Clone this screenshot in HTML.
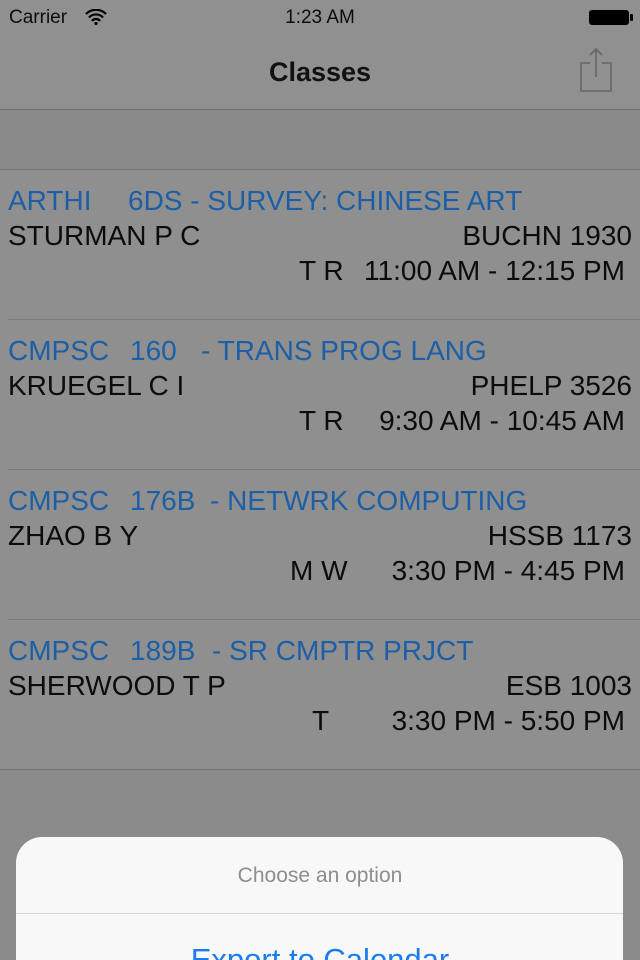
<!DOCTYPE html>
<html style="margin:0;width:640px;height:960px;overflow:hidden"><head><style>
body{margin:0;width:640px;height:960px;overflow:hidden;background:#8b8b8c;font-family:"Liberation Sans",sans-serif;position:relative}
.abs{position:absolute}
.t{position:absolute;font-size:28px;white-space:nowrap;line-height:1}
.b{color:#1c5fa6}.k{color:#0c0c0c}
</style></head><body>
<div class="abs" style="left:0;top:0;width:640px;height:109px;background:#909090"></div>
<div class="abs" style="left:0;top:109px;width:640px;height:1px;background:#6e6e6e"></div>
<div class="abs" style="left:0;top:110px;width:640px;height:59px;background:#8a8a8a"></div>
<div class="abs" style="left:0;top:169px;width:640px;height:1px;background:#747474"></div>
<div class="abs" style="left:0;top:170px;width:640px;height:599px;background:#8f8f8f"></div>
<div class="abs" style="left:0;top:769px;width:640px;height:1px;background:#747474"></div>
<div class="abs" style="left:8px;top:319px;width:632px;height:1px;background:#7a7a7a"></div>
<div class="abs" style="left:8px;top:469px;width:632px;height:1px;background:#7a7a7a"></div>
<div class="abs" style="left:8px;top:619px;width:632px;height:1px;background:#7a7a7a"></div>

<div class="t k" style="left:9px;top:8px;font-size:19px">Carrier</div>
<svg class="abs" style="left:85px;top:9px" width="22" height="16" viewBox="0 0 22 16"><path d="M1 5a14 14 0 0 1 20 0M4 8.5a9.5 9.5 0 0 1 14 0M7 12a5 5 0 0 1 8 0" stroke="#000" stroke-width="2.2" fill="none"/><circle cx="11" cy="14.5" r="1.6"/></svg>
<div class="t k" style="left:0;width:640px;text-align:center;top:8px;font-size:19px">1:23 AM</div>
<div class="abs" style="left:589px;top:10px;width:40px;height:15px;background:#000;border-radius:3px"></div>
<div class="abs" style="left:630px;top:14px;width:3px;height:7px;background:#000;border-radius:1px"></div>
<div class="t k" style="left:0;width:640px;text-align:center;top:59px;font-size:27px;font-weight:bold;color:#111">Classes</div>
<svg class="abs" style="left:578px;top:46px" width="36" height="48" viewBox="0 0 36 48"><path d="M12 17H3v28h30V17h-9M18 3v28M12 9l6-6 6 6" stroke="#666" stroke-width="1.6" fill="none"/></svg>

<div class="t b" style="left:8px;top:187px">ARTHI</div><div class="t b" style="left:128px;top:187px">6DS - SURVEY: CHINESE ART</div>
<div class="t k" style="left:8px;top:222px">STURMAN P C</div>
<div class="t k" style="right:8px;top:222px">BUCHN 1930</div>
<div class="t k" style="left:299px;top:257px">T R</div><div class="t k" style="right:15px;top:257px">11:00 AM - 12:15 PM</div>

<div class="t b" style="left:8px;top:337px">CMPSC</div><div class="t b" style="left:130px;top:337px">160</div><div class="t b" style="left:201px;top:337px">- TRANS PROG LANG</div>
<div class="t k" style="left:8px;top:372px">KRUEGEL C I</div>
<div class="t k" style="right:8px;top:372px">PHELP 3526</div>
<div class="t k" style="left:299px;top:407px">T R</div><div class="t k" style="right:15px;top:407px">9:30 AM - 10:45 AM</div>

<div class="t b" style="left:8px;top:487px">CMPSC</div><div class="t b" style="left:130px;top:487px">176B</div><div class="t b" style="left:210px;top:487px">- NETWRK COMPUTING</div>
<div class="t k" style="left:8px;top:522px">ZHAO B Y</div>
<div class="t k" style="right:8px;top:522px">HSSB 1173</div>
<div class="t k" style="left:290px;top:557px">M W</div><div class="t k" style="right:15px;top:557px">3:30 PM - 4:45 PM</div>

<div class="t b" style="left:8px;top:637px">CMPSC</div><div class="t b" style="left:130px;top:637px">189B</div><div class="t b" style="left:212px;top:637px">- SR CMPTR PRJCT</div>
<div class="t k" style="left:8px;top:672px">SHERWOOD T P</div>
<div class="t k" style="right:8px;top:672px">ESB 1003</div>
<div class="t k" style="left:312px;top:707px">T</div>
<div class="t k" style="right:15px;top:707px">3:30 PM - 5:50 PM</div>

<div class="abs" style="left:16px;top:837px;width:607px;height:123px;background:#f8f8f8;border-radius:26px 26px 0 0"></div>
<div class="t" style="left:0;width:640px;text-align:center;top:865px;font-size:21px;color:#8e8e8e">Choose an option</div>
<div class="abs" style="left:16px;top:913px;width:607px;height:1px;background:#d6d6d6"></div>
<div class="t" style="left:0;width:640px;text-align:center;top:944px;font-size:31px;color:#1a7cf0">Export to Calendar</div>
</body></html>
